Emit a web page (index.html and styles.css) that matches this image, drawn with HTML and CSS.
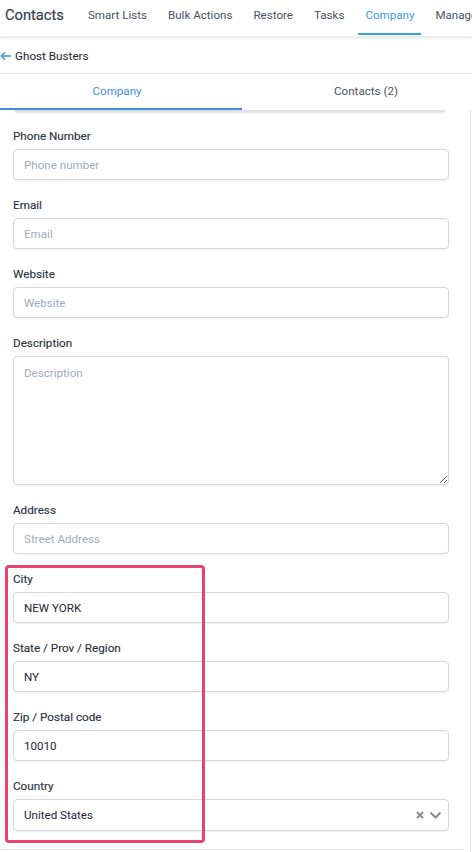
FILE: index.html
```html
<!DOCTYPE html>
<html lang="en">
<head>
<meta charset="utf-8">
<title>Contacts - Company</title>
<link rel="stylesheet" href="styles.css">
</head>
<body>
<header class="topnav">
  <div class="brand">Contacts</div>
  <nav class="navlinks">
    <a class="navlink">Smart Lists</a>
    <a class="navlink">Bulk Actions</a>
    <a class="navlink">Restore</a>
    <a class="navlink">Tasks</a>
    <a class="navlink active">Company</a>
    <a class="navlink">Manage</a>
  </nav>
</header>
<div class="crumb">
  <svg class="back" width="12" height="10" viewBox="0 0 12 10"><path d="M11 5H1.5M5 1.2L1.2 5 5 8.8" fill="none" stroke="#3b8fdd" stroke-width="1.3"/></svg>
  <span>Ghost Busters</span>
</div>
<div class="tabs">
  <div class="tab active">Company</div>
  <div class="tab">Contacts (2)</div>
</div>
<main class="pane">
  <div class="card-edge"></div>
  <form class="form">
    <div class="field">
      <label class="label">Phone Number</label>
      <input class="input" placeholder="Phone number">
    </div>
    <div class="field">
      <label class="label">Email</label>
      <input class="input" placeholder="Email">
    </div>
    <div class="field">
      <label class="label">Website</label>
      <input class="input" placeholder="Website">
    </div>
    <div class="field">
      <label class="label">Description</label>
      <textarea class="input area" placeholder="Description"></textarea>
    </div>
    <div class="field">
      <label class="label">Address</label>
      <input class="input" placeholder="Street Address">
    </div>
    <div class="field">
      <label class="label">City</label>
      <input class="input" value="NEW YORK">
    </div>
    <div class="field">
      <label class="label">State / Prov / Region</label>
      <input class="input" value="NY">
    </div>
    <div class="field">
      <label class="label">Zip / Postal code</label>
      <input class="input" value="10010">
    </div>
    <div class="field">
      <label class="label">Country</label>
      <div class="input select">
        <span>United States</span>
        <span class="sel-icons">
          <svg width="10" height="10" viewBox="0 0 10 10"><path d="M2 2l6 6M8 2l-6 6" stroke="#8a8a8a" stroke-width="2"/></svg>
          <svg width="13" height="10" viewBox="0 0 13 10"><path d="M1.5 2.5l5 5 5-5" fill="none" stroke="#8a8a8a" stroke-width="2"/></svg>
        </span>
      </div>
    </div>
    <div class="highlight"></div>
  </form>
  <div class="bottom-line"></div>
</main>
</body>
</html>
```
FILE: styles.css
```css
* { box-sizing: border-box; }
html, body { margin: 0; padding: 0; }
body {
  font-family: Roboto, "Liberation Sans", sans-serif;
  background: #fff;
  color: #1f2937;
  width: 472px;
  overflow: hidden;
}
.topnav {
  display: flex;
  align-items: stretch;
  height: 37px;
  padding-left: 5px;
  box-shadow: 0 1px 3px rgba(0, 0, 0, 0.12);
  border-bottom: 1px solid #eceef1;
  position: relative;
  z-index: 1;
  white-space: nowrap;
  overflow: hidden;
}
.brand {
  font-size: 14.7px;
  color: #363f4c;
  -webkit-text-stroke: 0.2px #363f4c;
  line-height: 31px;
  margin-right: 17px;
}
.navlinks {
  display: flex;
  gap: 7px;
}
.navlink {
  display: block;
  padding: 0 7px;
  font-size: 11.6px;
  color: #4a5361;
  line-height: 31px;
  border-bottom: 2px solid transparent;
  height: 35px;
}
.navlink.active {
  color: #3d9de6;
  border-bottom-color: #3d9de6;
}
.crumb {
  display: flex;
  align-items: center;
  gap: 3px;
  height: 37px;
  border-bottom: 1px solid #e6e8eb;
  font-size: 11.7px;
  color: #1f2433;
  padding-top: 1px;
}
.back { display: block; }
.tabs {
  display: flex;
  height: 36px;
  width: 490px;
}
.tab {
  display: flex;
  align-items: center;
  justify-content: center;
  font-size: 11.6px;
  color: #4a5361;
  border-bottom: 2px solid transparent;
}
.tab:first-child { width: 242px; padding-right: 8px; }
.tab:last-child { width: 248px; }
.tab.active {
  color: #3b8fe4;
  border-bottom-color: #3b8fe4;
}
.pane {
  width: 471px;
  border-right: 1px solid #e4e6ea;
  height: 742px;
  position: relative;
}
.card-edge {
  height: 2px;
  margin: 0 25px 0 15px;
  background: #dfe1e5;
  box-shadow: 0 1px 2px rgba(0, 0, 0, 0.12);
}
.form {
  position: relative;
  padding: 16px 0 0 13px;
  width: 449px;
  display: flex;
  flex-direction: column;
  gap: 17px;
}
.field {
  display: flex;
  flex-direction: column;
  gap: 5px;
}
.label {
  font-size: 11.7px;
  line-height: 16px;
  color: #2b3445;
  -webkit-text-stroke: 0.15px #2b3445;
}
.input {
  display: block;
  width: 436px;
  height: 31px;
  border: 1px solid #d5d7dc;
  border-radius: 4px;
  box-shadow: 0 1px 2px rgba(0, 0, 0, 0.06);
  padding: 0 10px;
  font-family: inherit;
  font-size: 11.6px;
  color: #1f2433;
  background: #fff;
  margin: 0;
  outline: none;
}
.input::placeholder { color: #a4acb8; }
.area {
  height: 129px;
  padding-top: 9px;
  resize: both;
}
.select {
  height: 32px;
  display: flex;
  align-items: center;
  justify-content: space-between;
  padding-right: 6px;
}
.sel-icons {
  display: flex;
  align-items: center;
  gap: 4px;
}
.sel-icons svg { display: block; }
.highlight {
  position: absolute;
  left: 5px;
  top: 453px;
  width: 200px;
  height: 278px;
  border: 3px solid #e8436b;
  border-radius: 4px;
  pointer-events: none;
}
.bottom-line {
  margin-top: 18px;
  width: 463px;
  height: 1px;
  background: #e0e2e6;
}
```
